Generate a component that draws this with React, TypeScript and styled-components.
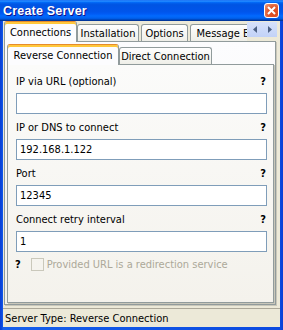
import React from "react";
import styled, { createGlobalStyle, css } from "styled-components";

const GlobalStyle = createGlobalStyle`
  html, body {
    margin: 0;
    padding: 0;
    background: #fff;
  }
  body {
    width: 283px;
    height: 330px;
    overflow: hidden;
  }
`;

const uiFont = css`
  font-family: "DejaVu Sans Condensed", "DejaVu Sans", sans-serif;
  font-stretch: condensed;
  font-size: 11px;
`;

const Window = styled.div`
  ${uiFont};
  width: 283px;
  height: 330px;
  box-sizing: border-box;
  display: flex;
  flex-direction: column;
  background: linear-gradient(to right, #0a3fd4, #0b4ae0 2px, #1660ec 3px, #0b4ae0 280px, #0a3fd4);
  color: #000;
`;

const TitleBar = styled.div`
  height: 21px;
  flex: none;
  display: flex;
  align-items: center;
  justify-content: space-between;
  padding: 0 4px 0 3px;
  background: linear-gradient(
    to bottom,
    #0058ee 0%,
    #3593ff 4%,
    #288eff 6%,
    #127dff 8%,
    #036ffc 10%,
    #0262ee 14%,
    #0057e5 20%,
    #0054e3 24%,
    #0055eb 56%,
    #005bf5 66%,
    #026afe 76%,
    #0062ef 86%,
    #0052d6 92%,
    #0040ab 94%,
    #003092 100%
  );
`;

const Title = styled.span`
  font-family: "Liberation Sans", sans-serif;
  font-weight: bold;
  font-size: 12.5px;
  color: #fff;
  text-shadow: 1px 1px #0f1089;
  letter-spacing: 0.2px;
`;

const CloseBtn = styled.div`
  width: 15px;
  height: 15px;
  box-sizing: border-box;
  border: 1px solid #fff;
  border-radius: 3px;
  background: radial-gradient(circle at 70% 70%, #d9461a 0, #e0592f 50%, #eb8a66 85%, #f6c3ad 100%);
  display: flex;
  align-items: center;
  justify-content: center;
`;

const Body = styled.div`
  flex: 1;
  margin: 0 3px 3px;
  background: #ece9d8;
  display: flex;
  flex-direction: column;
`;

const TabStrip = styled.div<{ $inset?: number }>`
  display: flex;
  height: 21px;
  flex: none;
  padding-left: ${(p) => p.$inset ?? 0}px;
  position: relative;
  z-index: 1;
`;

const TabViewport = styled.div`
  flex: 1;
  min-width: 0;
  display: flex;
  align-items: flex-end;
  overflow: hidden;
`;

const Tab = styled.div<{ $active?: boolean; $w: number; $gap?: number }>`
  box-sizing: border-box;
  width: ${(p) => p.$w}px;
  margin-left: ${(p) => p.$gap ?? 0}px;
  flex: none;
  display: flex;
  align-items: center;
  justify-content: center;
  border: 1px solid #919b9c;
  border-bottom: none;
  border-radius: 3px 3px 0 0;
  white-space: nowrap;
  overflow: hidden;
  ${(p) =>
    p.$active
      ? css`
          height: 21px;
          padding-top: 1px;
          background: #fcfcfe;
          border-top: 1px solid #e68b2c;
          box-shadow: inset 0 2px #ffc83c;
        `
      : css`
          height: 17px;
          margin-bottom: 1px;
          padding-top: 1px;
          background: linear-gradient(#fff, #fafaf9 26%, #f0f0ea 95%, #ecebe5);
        `}
`;

const Scroller = styled.div`
  display: flex;
  width: 30px;
  height: 15px;
  margin: 1px 3px 0 0;
  flex: none;
`;

const ScrollBtn = styled.div`
  flex: 1;
  display: flex;
  align-items: center;
  justify-content: center;
  background: linear-gradient(#d6e1fb, #c2d2f7);
`;

const OuterPanel = styled.div`
  box-sizing: border-box;
  height: 264px;
  flex: none;
  margin: -1px 4px 0 1px;
  padding: 2px 1px 1px 2px;
  border: 1px solid #919b9c;
  box-shadow: 1px 1px 0 #c9c7ba;
  background: linear-gradient(#fcfcfe, #f4f3ee);
  display: flex;
  flex-direction: column;
`;

const InnerPanel = styled.div`
  flex: 1;
  margin-top: -1px;
  padding: 9px 6px 0 8px;
  border: 1px solid #919b9c;
  box-shadow: 1px 1px 0 #c9c7ba;
  background: linear-gradient(#fbfbfa, #f4f2ec);
`;

const Field = styled.div`
  margin-bottom: 6px;
`;

const LabelRow = styled.div`
  height: 14px;
  margin-bottom: 5px;
  display: flex;
  align-items: center;
  justify-content: space-between;
`;

const Help = styled.span`
  font-weight: bold;
  margin-right: 1px;
`;

const TextBox = styled.input`
  ${uiFont};
  display: block;
  width: 100%;
  height: 21px;
  box-sizing: border-box;
  margin: 0;
  padding: 0 3px;
  border: 1px solid #7f9db9;
  background: #fff;
  color: #000;
  outline: none;
`;

const CheckRow = styled.div`
  height: 13px;
  margin-top: 2px;
  display: flex;
  align-items: center;
`;

const CheckBox = styled.span`
  width: 13px;
  height: 13px;
  box-sizing: border-box;
  margin-left: 9px;
  border: 1px solid #cac8bb;
  flex: none;
`;

const DisabledText = styled.span`
  margin-left: 3px;
  color: #aca899;
`;

const StatusBar = styled.div`
  flex: 1;
  margin-top: 3px;
  padding: 1px 0 0 2px;
  border-top: 1px solid #aca899;
  display: flex;
  align-items: center;
`;

const fields = [
  { label: "IP via URL (optional)", value: "" },
  { label: "IP or DNS to connect", value: "192.168.1.122" },
  { label: "Port", value: "12345" },
  { label: "Connect retry interval", value: "1" },
];

const Arrow = ({ dir }: { dir: "left" | "right" }) => (
  <svg width="4" height="7" viewBox="0 0 4 7">
    <polygon points={dir === "left" ? "4,0 4,7 0,3.5" : "0,0 0,7 4,3.5"} fill="#4d6185" />
  </svg>
);

const App = () => {
  return (
    <>
      <GlobalStyle />
      <Window>
        <TitleBar>
          <Title>Create Server</Title>
          <CloseBtn>
            <svg width="9" height="9" viewBox="0 0 9 9">
              <path d="M1 1 L8 8 M8 1 L1 8" stroke="#fff" strokeWidth="2" />
            </svg>
          </CloseBtn>
        </TitleBar>
        <Body>
          <TabStrip $inset={1}>
            <TabViewport>
              <Tab $active $w={73}>Connections</Tab>
              <Tab $w={62}>Installation</Tab>
              <Tab $w={47} $gap={2}>Options</Tab>
              <Tab $w={78} $gap={2}>Message Box</Tab>
            </TabViewport>
            <Scroller>
              <ScrollBtn>
                <Arrow dir="left" />
              </ScrollBtn>
              <ScrollBtn>
                <Arrow dir="right" />
              </ScrollBtn>
            </Scroller>
          </TabStrip>
          <OuterPanel>
            <TabStrip>
              <TabViewport>
                <Tab $active $w={112}>Reverse Connection</Tab>
                <Tab $w={93}>Direct Connection</Tab>
              </TabViewport>
            </TabStrip>
            <InnerPanel>
              {fields.map((f) => (
                <Field key={f.label}>
                  <LabelRow>
                    <span>{f.label}</span>
                    <Help>?</Help>
                  </LabelRow>
                  <TextBox defaultValue={f.value} />
                </Field>
              ))}
              <CheckRow>
                <Help style={{ marginLeft: -1 }}>?</Help>
                <CheckBox />
                <DisabledText>Provided URL is a redirection service</DisabledText>
              </CheckRow>
            </InnerPanel>
          </OuterPanel>
          <StatusBar>Server Type: Reverse Connection</StatusBar>
        </Body>
      </Window>
    </>
  );
};

export default App;
